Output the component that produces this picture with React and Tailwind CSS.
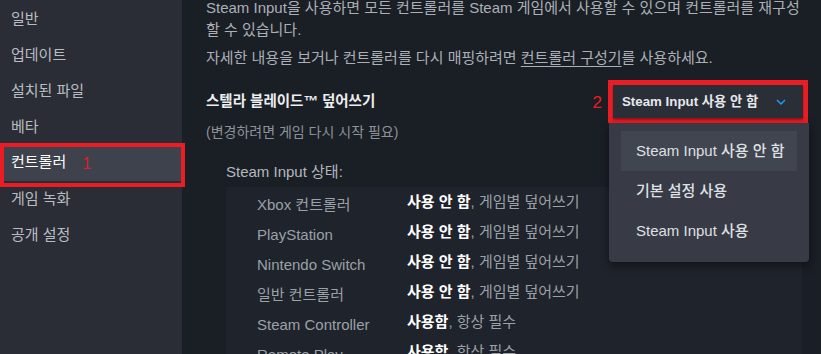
import React from "react";

const font = { fontFamily: '"Liberation Sans", "Noto Sans CJK KR", sans-serif' };

const sideItems = ["일반", "업데이트", "설치된 파일", "베타", "컨트롤러", "게임 녹화", "공개 설정"];

const rows = [
  ["Xbox 컨트롤러", "사용 안 함", ", 게임별 덮어쓰기"],
  ["PlayStation", "사용 안 함", ", 게임별 덮어쓰기"],
  ["Nintendo Switch", "사용 안 함", ", 게임별 덮어쓰기"],
  ["일반 컨트롤러", "사용 안 함", ", 게임별 덮어쓰기"],
  ["Steam Controller", "사용함", ", 항상 필수"],
  ["Remote Play", "사용함", ", 항상 필수"],
];

function Chevron() {
  return (
    <svg width="10" height="6" viewBox="0 0 10 6" fill="none">
      <path d="M1 1 L5 5 L9 1" stroke="#1a9fff" strokeWidth="1.4" />
    </svg>
  );
}

export default function App() {
  return (
    <div style={font} className="flex h-[354px] w-[821px] overflow-hidden bg-[#1a1e25] text-[15px]">
      {/* Sidebar */}
      <div className="w-[182px] shrink-0 bg-[#2a2d35] pt-[1px]">
        {sideItems.map((t) => {
          const sel = t === "컨트롤러";
          return (
            <div
              key={t}
              className={`relative flex h-[36px] items-center pl-[11px] text-[15px] ${
                sel ? "bg-[#3d424d] text-white" : "text-[#b9bdc1]"
              }`}
            >
              <span className={sel ? "-mt-[2px]" : ""}>{t}</span>
              {sel && (
                <>
                  <span className="absolute left-[82px] top-[9px] text-[17px] leading-[20px] text-[#d1232d]">1</span>
                  <div className="pointer-events-none absolute -top-[2px] -bottom-[6px] left-0 -right-[3px] border-4 border-[#ec1c24]" />
                </>
              )}
            </div>
          );
        })}
      </div>

      {/* Main */}
      <div className="flex min-w-0 flex-1 flex-col pl-[24px] pr-[19px]">
        <p className="-mt-[3px] whitespace-nowrap leading-[22px] text-[#abb0b6]">
          Steam Input을 사용하면 모든 컨트롤러를 Steam 게임에서 사용할 수 있으며 컨트롤러를 재구성
          <br />할 수 있습니다.
        </p>
        <p className="mt-[6px] whitespace-nowrap leading-[22px] text-[#abb0b6]">
          자세한 내용을 보거나 컨트롤러를 다시 매핑하려면 <span className="underline underline-offset-[3px]">컨트롤러 구성기</span>를 사용하세요.
        </p>

        <div className="mt-[11px] flex h-[43px] items-center justify-between">
          <span className="text-[14.5px] font-semibold text-[#eceef0]">스텔라 블레이드™ 덮어쓰기</span>
          <div className="-mr-[6px] flex items-center">
            <span className="mr-[6px] mt-[3px] text-[17px] leading-[20px] text-[#ec1c24]">2</span>
            <div className="relative border-[5px] border-[#ec1c24]">
              <div className="flex h-[33px] w-[190px] items-center justify-between bg-[#2a2e37] pl-[9px] pr-[17px] shadow-[0_2px_2px_rgba(0,0,0,0.35)]">
                <span className="whitespace-nowrap text-[13.3px] font-semibold text-[#e6e8eb]">Steam Input 사용 안 함</span>
                <Chevron />
              </div>
              <div className="absolute left-[-4px] top-[38px] z-10 w-[200px] rounded-b-[4px] bg-[#383b45] px-[12px] pt-[8px] pb-[11px] shadow-[0_4px_10px_rgba(0,0,0,0.45)]">
                {["Steam Input 사용 안 함", "기본 설정 사용", "Steam Input 사용"].map((t, i) => (
                  <div
                    key={t}
                    className={`flex h-[40px] items-center whitespace-nowrap pl-[15px] font-medium text-[#dde0e4] ${
                      i === 0 ? "bg-[#41454f]" : ""
                    }`}
                  >
                    {t}
                  </div>
                ))}
              </div>
            </div>
          </div>
        </div>

        <div className="-mt-[1px] text-[14px] leading-[20px] text-[#8d9298]">(변경하려면 게임 다시 시작 필요)</div>

        <div className="mt-[11px] h-px bg-[#3a3e47]" />

        <div className="ml-[20px] mt-[9px] leading-[20px] text-[#b3b8bd]">Steam Input 상태:</div>

        <div className="ml-[20px] mt-[5px] flex-1 bg-[#1f232b] pt-[2px]">
          {rows.map(([a, b, c]) => (
            <div key={a} className="flex h-[30px] items-center pl-[31px]">
              <span className="w-[150px] shrink-0 pt-[2px] text-[#9ba1a7]">{a}</span>
              <span className="-mt-[3px] whitespace-nowrap">
                <span className="font-semibold text-white">{b}</span>
                <span className="text-[#9ba1a7]">{c}</span>
              </span>
            </div>
          ))}
        </div>
      </div>
    </div>
  );
}
